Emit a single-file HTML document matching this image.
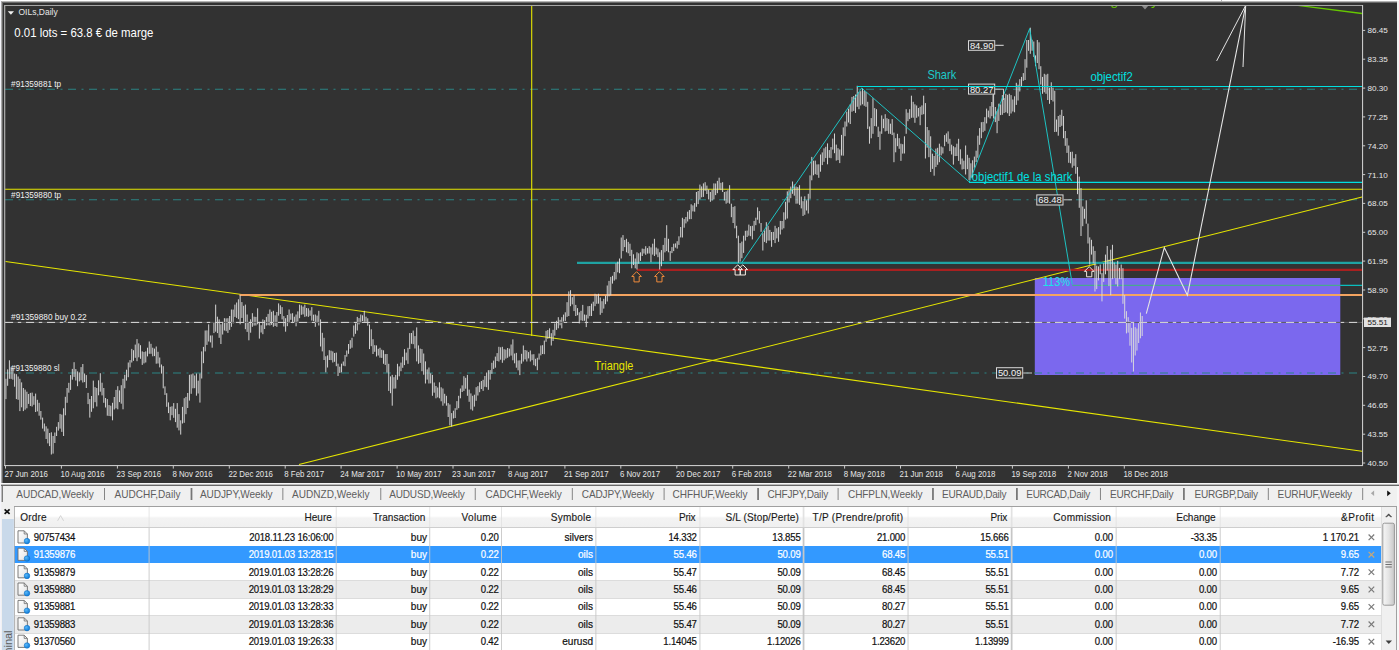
<!DOCTYPE html>
<html lang="fr"><head><meta charset="utf-8"><title>OILs,Daily</title>
<style>
html,body{margin:0;padding:0}
body{width:1399px;height:650px;overflow:hidden;background:#f0f0f0;position:relative;font-family:"Liberation Sans",Arial,sans-serif}
.chart{position:absolute;left:0;top:0;display:block}
.panel{position:absolute;left:0;top:486px;width:1600.0px;height:164px;transform:scaleX(0.874375);transform-origin:0 0;background:#f0f0f0;overflow:hidden}
.panel *{position:absolute;box-sizing:border-box;white-space:nowrap}
.tabs{left:0;top:0;width:100%;height:19px}
.tab{top:0;line-height:16.6px;font-size:11.5px;color:#5e5e5e}
.sep{top:2px;width:1.25px;height:11.8px;background:#767676}
.grid{background:#fff;border-top:1px solid #a0a0a0;border-left:1.2px solid #a0a0a0}
.thead{height:21px;background:linear-gradient(#ffffff 0,#ffffff 45%,#f3f3f3 55%,#f0f0f0 100%);border-bottom:1px solid #cecece}
.th{top:-0.1px;-webkit-text-stroke:0.15px currentColor;line-height:20px;font-size:11.5px;color:#1a1a1a}
.hdiv{top:0;width:1.2px;height:20px;background:#e2e2e2}
.row{height:17.4px;background:#fff;border-top:1px solid #dcdcdc}
.row.alt{background:#ececec}
.row.sel{background:#3399ff;border-top-color:#3399ff;color:#fff}
.row.sel+.row{border-top-color:#fff}
.row.first{border-top-color:#fff}
.td{top:-0.5px;line-height:17.4px;font-size:11px;letter-spacing:-0.21px;color:#101010;-webkit-text-stroke:0.22px currentColor}
.td.t{font-size:11.5px;letter-spacing:0}
.row.sel .td{color:#fff}
.vdiv{width:1.2px;height:122px;background:#c6c6c6}
.overlay{position:absolute;left:0;top:486px;display:block}
.vtext{position:absolute;left:2.5px;top:650px;width:60px;height:11px;line-height:11px;font-size:11px;color:#5c5c5c;transform-origin:0 0;transform:rotate(-90deg) translate(-22px,0);white-space:nowrap}
</style></head>
<body>
<svg class="chart" width="1399" height="486" viewBox="0 0 1399 486" font-family="Liberation Sans, Arial, sans-serif">
<rect x="0" y="0" width="1399" height="486" fill="#f0f0f0"/>
<rect x="0" y="0" width="1399" height="1" fill="#ffffff"/>
<rect x="1" y="1" width="1396" height="1" fill="#b4b4b4"/>
<rect x="1" y="2" width="1396" height="481" fill="#696969"/>
<rect x="1" y="1" width="1" height="482" fill="#a8a8a8"/>
<rect x="3" y="3" width="1394" height="480" fill="#323232"/>
<rect x="0" y="0" width="1" height="486" fill="#f4f4fa"/>
<rect x="1221" y="0" width="1" height="2" fill="#b0b0b0"/>
<rect x="0" y="483" width="1399" height="1.2" fill="#f6f6f6"/>
<rect x="1" y="484.7" width="1399" height="1.1" fill="#484848"/>
<defs><clipPath id="plot"><rect x="5" y="5.5" width="1357.5" height="460"/></clipPath></defs>
<g clip-path="url(#plot)">
<rect x="1034.8" y="278" width="305.5" height="97" fill="#7b68ee"/>
<line x1="5" y1="89.3" x2="1362" y2="89.3" stroke="#2b8484" stroke-width="1.1" stroke-dasharray="8 5.5 2 5.5"/>
<line x1="5" y1="199.8" x2="1362" y2="199.8" stroke="#2b8484" stroke-width="1.1" stroke-dasharray="8 5.5 2 5.5"/>
<line x1="5" y1="373.0" x2="1362" y2="373.0" stroke="#2b8484" stroke-width="1.1" stroke-dasharray="8 5.5 2 5.5"/>
<line x1="5" y1="189.3" x2="1362" y2="189.3" stroke="#e6e600" stroke-width="1.1" />
<line x1="531.7" y1="5" x2="531.7" y2="336" stroke="#e6e600" stroke-width="1.1" />
<line x1="5.5" y1="261.5" x2="1362" y2="451.3" stroke="#e6e600" stroke-width="1.05" />
<line x1="299" y1="464.5" x2="1362" y2="196.9" stroke="#e6e600" stroke-width="1.05" />
<line x1="239.5" y1="295" x2="1362" y2="295" stroke="#f4a460" stroke-width="2.0" />
<line x1="577" y1="262.8" x2="1362" y2="262.8" stroke="#1fa3a3" stroke-width="2.2" />
<line x1="637" y1="269.9" x2="1362" y2="269.9" stroke="#a82020" stroke-width="2.2" />
<line x1="969" y1="182.3" x2="1362" y2="182.3" stroke="#00e0e0" stroke-width="1.2" />
<line x1="1072.3" y1="285.3" x2="1340.3" y2="285.3" stroke="#3cb878" stroke-width="1.0" />
<line x1="1340.3" y1="285.3" x2="1362" y2="285.3" stroke="#00e0e0" stroke-width="1.0" />
<path d="M5.90 378.8V399.1M7.65 369.4V385.8M9.40 360.3V378.8M11.14 367.1V378.9M12.89 367.7V379.7M14.64 373.6V386.7M16.39 374.2V399.1M18.14 376.5V399.8M19.88 378.8V411.1M21.63 382.4V407.3M23.38 388.0V411.1M25.13 389.6V409.7M26.88 391.7V408.3M28.63 394.0V403.9M30.37 392.9V406.0M32.12 392.6V406.5M33.87 396.2V404.8M35.62 393.6V412.0M37.37 399.8V411.4M39.11 402.8V415.7M40.86 411.0V419.6M42.61 417.6V428.6M44.36 423.5V431.4M46.11 426.3V439.0M47.85 428.6V443.4M49.60 433.0V446.1M51.35 432.3V454.5M53.10 436.0V453.6M54.85 432.5V443.0M56.60 426.8V436.0M58.34 422.1V430.6M60.09 413.9V428.6M61.84 414.6V431.9M63.59 408.3V436.0M65.34 396.8V415.3M67.08 388.0V402.8M68.83 382.8V392.7M70.58 375.1V389.9M72.33 368.9V379.7M74.08 362.2V376.9M75.83 369.1V380.5M77.57 371.4V386.2M79.32 372.4V381.4M81.07 367.1V380.3M82.82 364.0V382.5M84.57 373.5V382.1M86.31 375.1V388.0M88.06 392.9V404.1M89.81 399.1V417.6M91.56 396.0V411.8M93.31 380.6V408.3M95.05 387.1V402.2M96.80 388.0V406.5M98.55 380.3V395.3M100.30 373.2V391.7M102.05 382.7V395.4M103.80 388.0V402.8M105.54 398.0V407.5M107.29 399.1V415.7M109.04 405.1V416.0M110.79 405.7V416.3M112.54 402.8V420.3M114.28 397.0V409.5M116.03 389.9V408.3M117.78 386.2V409.3M119.53 390.4V402.1M121.28 385.2V403.7M123.02 378.8V409.3M124.77 374.8V388.3M126.52 369.7V380.6M128.27 362.5V377.2M130.02 360.1V367.4M131.76 348.9V362.5M133.51 350.2V360.8M135.26 344.6V357.8M137.01 339.1V361.2M138.76 343.4V357.3M140.51 345.2V358.8M142.25 351.4V364.9M144.00 352.0V363.4M145.75 351.4V362.5M147.50 347.7V356.4M149.25 341.5V353.8M150.99 343.8V353.8M152.74 347.7V356.3M154.49 348.6V356.1M156.24 346.5V363.7M157.99 351.8V363.5M159.73 357.5V367.4M161.48 364.5V373.6M163.23 366.2V388.3M164.98 386.4V394.9M166.73 393.2V406.8M168.48 402.4V413.1M170.22 406.8V420.3M171.97 406.3V415.2M173.72 403.1V417.8M175.47 408.8V422.1M177.22 403.1V427.7M178.96 414.1V430.4M180.71 420.3V434.6M182.46 406.9V423.5M184.21 398.2V422.8M185.96 396.9V414.2M187.71 393.0V408.0M189.45 374.8V400.6M191.20 374.4V393.8M192.95 373.5V388.3M194.70 375.5V388.2M196.45 373.5V395.7M198.19 380.7V393.5M199.94 373.5V402.6M201.69 351.4V378.5M203.44 346.9V363.2M205.19 330.5V351.4M206.93 330.4V344.9M208.68 324.3V341.5M210.43 335.5V342.4M212.18 335.4V347.7M213.93 322.5V333.1M215.67 304.6V331.7M217.42 316.7V333.1M219.17 319.4V337.8M220.92 324.3V344.0M222.67 321.9V334.5M224.42 318.2V330.5M226.16 318.4V331.2M227.91 318.2V332.9M229.66 316.0V329.9M231.41 309.5V326.8M233.16 309.6V323.4M234.90 304.6V316.9M236.65 302.5V317.9M238.40 299.3V319.2M240.15 295.3V324.3M241.90 302.1V317.9M243.65 305.8V323.1M245.39 304.6V329.2M247.14 314.5V331.9M248.89 321.8V340.3M250.64 319.3V332.7M252.39 313.2V326.8M254.13 316.7V325.6M255.88 316.9V325.5M257.63 308.3V324.3M259.38 321.8V338.6M261.13 325.2V332.5M262.87 319.4V334.2M264.62 320.2V329.0M266.37 316.9V325.5M268.12 313.9V325.2M269.87 309.5V325.5M271.61 311.8V324.9M273.36 310.8V326.8M275.11 315.3V326.0M276.86 312.0V326.8M278.61 303.4V315.7M280.36 305.3V314.0M282.10 307.1V319.4M283.85 316.1V326.5M285.60 318.2V331.7M287.35 315.0V326.2M289.10 309.5V323.1M290.84 313.6V319.8M292.59 313.2V323.1M294.34 316.7V322.5M296.09 314.5V326.3M297.84 311.4V321.6M299.58 304.6V318.2M301.33 305.3V314.8M303.08 306.6V314.4M304.83 304.6V316.9M306.58 308.0V316.3M308.33 308.3V316.9M310.07 310.4V315.8M311.82 307.1V320.6M313.57 314.7V321.2M315.32 314.5V326.8M317.07 315.6V322.9M318.81 310.8V325.5M320.56 319.4V346.5M322.31 332.8V351.4M324.06 337.8V360.0M325.81 356.3V372.3M327.55 355.4V367.5M329.30 350.2V360.0M331.05 350.7V360.1M332.80 351.4V362.5M334.55 353.0V361.8M336.30 352.6V366.2M338.04 363.7V376.0M339.79 366.7V372.9M341.54 363.7V372.3M343.29 361.5V365.7M345.04 355.1V366.2M346.78 350.5V356.7M348.53 344.0V353.8M350.28 340.2V348.8M352.03 337.8V347.7M353.78 325.5V336.6M355.52 323.4V333.8M357.27 316.9V330.5M359.02 318.1V324.4M360.77 314.5V323.1M362.52 315.3V321.1M364.27 310.8V321.8M366.01 316.7V321.8M367.76 318.3V325.7M369.51 324.5V349.1M371.26 329.3V346.2M373.01 339.2V354.0M374.75 345.2V351.8M376.50 345.4V356.5M378.25 348.8V355.5M380.00 347.8V357.7M381.75 349.7V357.9M383.49 350.3V363.8M385.24 354.1V364.9M386.99 354.0V372.5M388.74 363.8V390.9M390.49 376.4V393.2M392.24 374.9V405.7M393.98 377.2V388.7M395.73 374.9V388.5M397.48 363.8V379.8M399.23 366.4V376.3M400.98 362.6V371.2M402.72 356.8V367.8M404.47 349.1V365.1M406.22 352.6V360.4M407.97 347.8V363.8M409.72 333.1V349.1M411.46 333.0V343.8M413.21 330.6V344.2M414.96 336.1V348.5M416.71 327.4V361.4M418.46 345.4V363.8M420.21 348.6V362.9M421.95 349.1V371.2M423.70 353.5V374.7M425.45 361.4V383.5M427.20 369.4V379.6M428.95 367.5V383.5M430.69 373.3V383.4M432.44 374.9V395.8M434.19 382.5V392.7M435.94 386.0V398.3M437.69 387.5V397.4M439.43 382.3V398.3M441.18 387.3V401.3M442.93 388.5V405.7M444.68 393.8V403.4M446.43 395.8V405.7M448.18 403.1V417.0M449.92 404.5V425.4M451.67 413.1V426.6M453.42 410.7V418.5M455.17 408.2V418.0M456.92 401.1V409.8M458.66 395.8V408.2M460.41 388.5V398.3M462.16 385.4V392.0M463.91 376.2V390.9M465.66 377.8V388.7M467.40 374.9V395.8M469.15 389.6V401.8M470.90 393.4V409.4M472.65 395.8V410.6M474.40 394.7V406.6M476.15 387.2V400.8M477.89 386.1V395.5M479.64 382.3V392.2M481.39 381.0V389.0M483.14 379.8V390.9M484.89 376.0V386.8M486.63 372.5V387.2M488.38 370.2V389.8M490.13 370.1V379.7M491.88 362.8V373.8M493.63 360.6V368.9M495.37 356.6V367.7M497.12 353.1V361.0M498.87 346.8V361.5M500.62 347.3V359.7M502.37 346.8V362.8M504.12 349.2V360.3M505.86 349.6V358.6M507.61 348.0V357.8M509.36 348.6V356.6M511.11 344.5V355.6M512.86 339.4V360.3M514.60 353.5V363.3M516.35 352.9V367.7M518.10 360.5V370.3M519.85 360.3V375.1M521.60 353.8V363.7M523.34 345.5V361.5M525.09 350.0V359.4M526.84 350.5V361.5M528.59 352.1V358.4M530.34 350.5V361.5M532.09 354.4V360.2M533.83 354.2V365.2M535.58 358.8V366.2M537.33 357.8V370.2M539.08 353.5V359.6M540.83 345.5V355.4M542.57 345.2V354.0M544.32 340.6V354.2M546.07 330.8V341.8M547.82 330.0V338.8M549.57 328.3V338.2M551.31 333.2V345.5M553.06 329.8V341.0M554.81 323.4V335.7M556.56 320.8V329.9M558.31 317.2V328.3M560.06 319.8V325.3M561.80 317.2V328.3M563.55 314.6V321.6M565.30 312.3V320.9M567.05 302.2V316.8M568.80 291.4V316.0M570.54 290.2V306.2M572.29 297.2V304.4M574.04 295.1V311.1M575.79 304.9V316.0M577.54 308.1V315.2M579.28 312.3V323.4M581.03 310.8V320.4M582.78 304.9V320.9M584.53 314.5V320.8M586.28 314.8V327.1M588.03 306.2V318.5M589.77 306.0V316.1M591.52 303.7V316.0M593.27 301.7V310.8M595.02 293.8V306.2M596.77 294.5V303.8M598.51 293.8V303.7M600.26 297.5V314.8M602.01 301.2V312.9M603.76 298.8V308.6M605.51 295.6V304.2M607.25 285.5V301.5M609.00 280.9V296.4M610.75 276.9V295.4M612.50 275.8V283.6M614.25 272.0V280.6M616.00 263.4V279.4M617.74 261.7V272.3M619.49 258.5V273.2M621.24 237.5V258.5M622.99 235.1V251.1M624.74 240.0V247.1M626.48 238.8V252.3M628.23 241.9V253.3M629.98 243.7V256.0M631.73 249.8V268.3M633.48 254.3V265.0M635.22 258.5V268.3M636.97 252.3V269.5M638.72 253.3V263.8M640.47 252.3V260.9M642.22 248.6V256.0M643.97 248.9V253.5M645.71 246.2V254.8M647.46 248.1V253.6M649.21 246.2V253.5M650.96 247.4V262.2M652.71 243.7V254.6M654.45 238.8V256.0M656.20 247.5V254.5M657.95 248.6V257.2M659.70 252.3V269.5M661.45 250.1V266.2M663.19 244.9V260.9M664.94 237.9V252.4M666.69 225.2V251.1M668.44 238.8V252.3M670.19 251.1V260.9M671.94 247.1V253.1M673.68 243.7V251.1M675.43 243.4V247.6M677.18 241.2V248.6M678.93 236.3V244.9M680.68 227.0V237.4M682.42 217.8V237.5M684.17 219.1V227.7M685.92 217.0V223.4M687.67 211.7V221.5M689.42 210.1V219.2M691.16 204.3V219.1M692.91 205.4V211.4M694.66 203.1V211.7M696.41 192.0V206.8M698.16 191.0V204.1M699.91 184.6V199.4M701.65 186.4V197.3M703.40 183.4V196.9M705.15 182.2V190.8M706.90 185.6V194.0M708.65 189.5V199.4M710.39 192.0V201.8M712.14 189.8V200.5M713.89 183.4V199.4M715.64 183.5V195.1M717.39 180.9V193.2M719.13 177.7V189.5M720.88 182.8V190.1M722.63 182.2V192.0M724.38 192.0V200.6M726.13 191.4V203.7M727.88 190.2V202.8M729.62 185.2V203.7M731.37 203.7V217.2M733.12 206.9V223.0M734.87 206.2V228.3M736.62 225.8V238.2M738.36 235.7V262.8M740.11 243.1V261.5M741.86 241.6V258.2M743.61 235.7V252.9M745.36 230.8V240.6M747.10 230.6V237.0M748.85 224.6V235.7M750.60 226.1V236.2M752.35 225.8V239.4M754.10 220.9V230.8M755.85 217.7V225.2M757.59 207.4V219.7M759.34 211.1V223.4M761.09 223.0V231.8M762.84 233.2V250.5M764.59 230.4V241.9M766.33 222.2V243.1M768.08 225.8V240.6M769.83 229.9V240.6M771.58 232.0V246.8M773.33 231.9V240.0M775.07 225.8V243.1M776.82 228.3V238.4M778.57 227.1V241.8M780.32 220.9V234.5M782.07 221.0V229.6M783.82 212.3V228.3M785.56 201.8V219.7M787.31 191.4V218.5M789.06 190.2V202.5M790.81 186.6V198.2M792.56 181.5V193.8M794.30 184.5V195.7M796.05 186.5V203.7M797.80 187.1V203.6M799.55 185.2V204.9M801.30 196.6V208.4M803.04 201.2V216.0M804.79 196.3V214.8M806.54 200.4V210.5M808.29 193.8V213.5M810.04 175.4V198.8M811.79 156.9V180.3M813.53 160.7V175.3M815.28 160.6V174.2M817.03 164.4V174.9M818.78 164.3V177.8M820.53 154.5V171.7M822.27 152.4V165.1M824.02 148.3V161.8M825.77 146.8V158.1M827.52 143.4V164.3M829.27 150.1V157.8M831.01 147.1V158.2M832.76 138.6V149.6M834.51 133.5V153.2M836.26 144.6V160.6M838.01 148.2V160.1M839.76 149.5V163.1M841.50 134.9V155.5M843.25 127.4V155.7M845.00 121.5V136.2M846.75 111.7V126.5M848.50 108.7V122.5M850.24 104.3V124.0M851.99 96.9V111.7M853.74 96.0V110.9M855.49 94.5V112.9M857.24 85.8V106.8M858.98 92.0V109.2M860.73 91.2V105.5M862.48 88.3V104.3M864.23 90.9V105.8M865.98 92.0V106.8M867.73 101.8V128.9M869.47 126.5V143.7M871.22 118.1V138.3M872.97 98.2V133.8M874.72 108.1V126.1M876.47 109.2V126.5M878.21 126.7V137.0M879.96 131.4V149.8M881.71 115.4V133.8M883.46 118.8V128.2M885.21 114.2V131.4M886.95 118.2V130.9M888.70 119.1V133.8M890.45 123.7V133.9M892.20 119.1V135.1M893.95 132.6V162.2M895.70 138.2V152.3M897.44 133.8V146.2M899.19 138.2V148.8M900.94 143.7V160.9M902.69 144.2V153.6M904.44 136.3V153.5M906.18 109.2V133.8M907.93 112.7V121.2M909.68 109.2V119.1M911.43 95.7V117.8M913.18 101.8V117.7M914.92 104.3V122.8M916.67 105.5V117.8M918.42 108.0V116.5M920.17 106.8V125.2M921.92 105.4V114.8M923.67 95.7V114.2M925.41 103.1V158.5M927.16 127.0V147.7M928.91 130.2V157.2M930.66 136.3V172.0M932.41 153.7V168.9M934.15 156.0V175.7M935.90 148.6V167.1M937.65 147.8V164.8M939.40 143.7V162.2M941.15 146.5V155.4M942.89 147.4V153.5M944.64 135.1V146.2M946.39 133.4V141.8M948.14 131.4V143.7M949.89 138.8V151.1M951.64 144.7V154.5M953.38 146.2V164.6M955.13 147.3V156.1M956.88 143.7V156.0M958.63 138.8V160.9M960.38 149.3V164.4M962.12 158.5V169.5M963.87 160.7V169.1M965.62 145.5V174.5M967.37 154.8V169.2M969.12 157.8V180.0M970.86 163.3V177.9M972.61 160.3V177.5M974.36 156.6V167.7M976.11 150.7V162.0M977.86 135.7V157.8M979.61 128.1V144.8M981.35 122.2V138.2M983.10 121.9V132.2M984.85 117.2V130.8M986.60 108.6V123.4M988.35 110.6V117.3M990.09 106.2V118.5M991.84 102.0V116.2M993.59 93.8V118.5M995.34 107.0V122.1M997.09 111.1V133.2M998.83 103.7V120.9M1000.58 104.4V115.1M1002.33 95.1V114.8M1004.08 98.1V113.0M1005.83 93.8V112.3M1007.58 94.8V113.3M1009.32 93.8V116.0M1011.07 95.1V113.5M1012.82 99.5V111.5M1014.57 96.3V112.3M1016.32 82.8V104.9M1018.06 84.7V100.5M1019.81 79.2V91.5M1021.56 76.9V86.2M1023.31 73.1V80.8M1025.06 59.2V80.0M1026.81 40.0V67.7M1028.55 40.0V50.8M1030.30 27.7V53.8M1032.05 39.7V50.7M1033.80 41.5V56.9M1035.55 55.4V66.2M1037.29 40.0V63.1M1039.04 42.3V69.2M1040.79 66.2V84.6M1042.54 76.9V93.8M1044.29 73.8V92.3M1046.03 74.6V93.8M1047.78 73.8V100.0M1049.53 87.7V103.8M1051.28 82.3V100.0M1053.03 87.7V101.5M1054.78 90.8V132.0M1056.52 119.5V131.8M1058.27 116.0V135.7M1060.02 114.8V127.0M1061.77 109.8V125.8M1063.52 116.0V138.2M1065.26 131.0V145.8M1067.01 138.2V152.9M1068.76 145.5V162.8M1070.51 151.9V163.3M1072.26 151.7V167.7M1074.00 158.2V165.8M1075.75 154.2V173.8M1077.50 167.1V194.2M1079.25 176.6V207.8M1081.00 188.0V236.0M1082.75 206.5V226.2M1084.49 208.8V218.7M1086.24 200.3V223.7M1087.99 223.6V243.5M1089.74 237.4V264.5M1091.49 239.8V254.6M1093.23 246.3V263.4M1094.98 250.9V291.5M1096.73 265.7V289.1M1098.48 266.4V280.4M1100.23 264.5V274.3M1101.97 273.1V301.4M1103.72 263.3V281.9M1105.47 254.6V274.3M1107.22 246.0V270.6M1108.97 259.7V286.1M1110.72 249.7V295.2M1112.46 244.8V279.2M1114.21 262.6V278.2M1115.96 264.5V284.2M1117.71 260.8V286.6M1119.46 267.9V279.2M1121.20 264.5V279.2M1122.95 268.2V303.8M1124.70 295.2V318.6M1126.45 311.2V333.4M1128.20 317.2V332.6M1129.94 321.1V345.7M1131.69 327.9V362.5M1133.44 322.3V371.5M1135.19 327.2V355.5M1136.94 328.5V350.6M1138.68 323.1V343.0M1140.43 312.5V338.3M1142.18 316.0V336.0" stroke="#dcdcdc" stroke-width="0.95" fill="none"/>
<line x1="5" y1="322.4" x2="1362" y2="322.4" stroke="#5c5c5c" stroke-width="1.0" />
<line x1="5" y1="322.4" x2="1362" y2="322.4" stroke="#e4e4e4" stroke-width="0.95" stroke-dasharray="8.1 4.7 3.4 4.8"/>
<polyline points="741.7,262.8 861.7,88.0 969.3,182.0 1029.7,28.6 1072.3,284.5" fill="none" stroke="#1ccaca" stroke-width="0.95" stroke-linejoin="round"/>
<rect x="968.5" y="40.7" width="26.200000000000045" height="9.599999999999994" fill="#323232" stroke="#d8d8d8" stroke-width="1"/>
<text x="969.9" y="49.0" font-size="9.6" fill="#f4f4f4" textLength="23.5" lengthAdjust="spacingAndGlyphs">84.90</text>
<line x1="995.2" y1="45.3" x2="1003.7" y2="45.3" stroke="#e0e0e0" stroke-width="1.0" />
<rect x="968.5" y="84.1" width="26.200000000000045" height="10.0" fill="#323232" stroke="#d8d8d8" stroke-width="1"/>
<text x="969.9" y="92.6" font-size="9.6" fill="#f4f4f4" textLength="23.5" lengthAdjust="spacingAndGlyphs">80.27</text>
<line x1="995.2" y1="89.2" x2="1003.7" y2="89.2" stroke="#c8c8c8" stroke-width="1.0" />
<line x1="1003.5" y1="89" x2="1003.5" y2="100" stroke="#c8c8c8" stroke-width="1.0" />
<line x1="993" y1="94.6" x2="993" y2="107" stroke="#c8c8c8" stroke-width="1.0" />
<rect x="1036.8" y="194.9" width="26.200000000000045" height="10.099999999999994" fill="#323232" stroke="#d8d8d8" stroke-width="1"/>
<text x="1038.2" y="203.4" font-size="9.6" fill="#f4f4f4" textLength="23.5" lengthAdjust="spacingAndGlyphs">68.48</text>
<line x1="1063.5" y1="199.8" x2="1072" y2="199.8" stroke="#c8c8c8" stroke-width="1.0" />
<rect x="996.5" y="367.7" width="26.200000000000045" height="10.400000000000034" fill="#323232" stroke="#d8d8d8" stroke-width="1"/>
<text x="997.9" y="376.4" font-size="9.6" fill="#f4f4f4" textLength="23.5" lengthAdjust="spacingAndGlyphs">50.09</text>
<line x1="1023.2" y1="373" x2="1032" y2="373" stroke="#c8c8c8" stroke-width="1.2" />
<line x1="857" y1="86.5" x2="1362" y2="86.5" stroke="#00e0e0" stroke-width="1.2" />
<polyline points="1146.3,313.7 1164.3,247.5 1187.4,295.2 1245.7,5.4" fill="none" stroke="#e4e4e4" stroke-width="1.1"/>
<line x1="1245.7" y1="5.4" x2="1216.6" y2="61" stroke="#e4e4e4" stroke-width="1.0" />
<line x1="1245.7" y1="5.4" x2="1243" y2="67" stroke="#e4e4e4" stroke-width="1.0" />
<path transform="translate(636.6,271.7)" d="M0 0L4.8 4.8H2.6V10.2H-2.6V4.8H-4.8Z" fill="none" stroke="#ee8a3c" stroke-width="1"/>
<path transform="translate(659.4,271.7)" d="M0 0L4.8 4.8H2.6V10.2H-2.6V4.8H-4.8Z" fill="none" stroke="#ee8a3c" stroke-width="1"/>
<path transform="translate(737.7,264.8)" d="M0 0L4.8 4.8H2.6V10.2H-2.6V4.8H-4.8Z" fill="none" stroke="#f4ece4" stroke-width="1"/>
<path transform="translate(742.8,264.8)" d="M0 0L4.8 4.8H2.6V10.2H-2.6V4.8H-4.8Z" fill="none" stroke="#f4ece4" stroke-width="1"/>
<path transform="translate(1089.2,266.6)" d="M0 0L4.8 4.8H2.6V10.2H-2.6V4.8H-4.8Z" fill="none" stroke="#f0e4dc" stroke-width="1"/>
<text x="594.4" y="370.2" font-size="12.8" fill="#e6e600" text-anchor="start" textLength="39.0" lengthAdjust="spacingAndGlyphs" >Triangle</text>
<text x="927.4" y="78.8" font-size="12.8" fill="#1ccaca" text-anchor="start" textLength="28.8" lengthAdjust="spacingAndGlyphs" >Shark</text>
<text x="1090.5" y="81.2" font-size="13" fill="#00e0e0" text-anchor="start" textLength="42.2" lengthAdjust="spacingAndGlyphs" >objectif2</text>
<text x="971.8" y="181.0" font-size="13" fill="#00e0e0" text-anchor="start" textLength="100.6" lengthAdjust="spacingAndGlyphs" >objectif1 de la shark</text>
<text x="1042.8" y="286.0" font-size="12.6" fill="#19e6e6" text-anchor="start" textLength="27.3" lengthAdjust="spacingAndGlyphs" >113%</text>
<text x="1090.7" y="4.6" font-size="13" fill="#66c800" text-anchor="start" textLength="67.5" lengthAdjust="spacingAndGlyphs" >Target Buy</text>
<path d="M1141.5 5.5h7l-3.5 4z" fill="#8c8c8c"/>
<line x1="1296" y1="5.2" x2="1362" y2="13.5" stroke="#66c800" stroke-width="1.3" />
</g>
<rect x="4" y="5" width="1359" height="1" fill="#a6a6a6"/>
<rect x="4" y="5" width="1.3" height="461" fill="#a6a6a6"/>
<rect x="1362" y="5" width="1.1" height="461" fill="#c8c8c8"/>
<rect x="4" y="465" width="1359" height="1.1" fill="#c8c8c8"/>
<path d="M7.8 11.2h6.2l-3.1 3.6z" fill="#f0f0f0"/>
<text x="18.5" y="15.2" font-size="9.3" fill="#e8e8e8" text-anchor="start" textLength="39.2" lengthAdjust="spacingAndGlyphs" >OILs,Daily</text>
<text x="14.3" y="37.1" font-size="12.6" fill="#ffffff" text-anchor="start" textLength="139.1" lengthAdjust="spacingAndGlyphs" >0.01 lots = 63.8 € de marge</text>
<text x="11.1" y="86.6" font-size="9.0" fill="#f0f0f0" text-anchor="start" textLength="50.0" lengthAdjust="spacingAndGlyphs" >#91359881 tp</text>
<text x="11.1" y="198.2" font-size="9.0" fill="#f0f0f0" text-anchor="start" textLength="50.0" lengthAdjust="spacingAndGlyphs" >#91359880 tp</text>
<text x="11.1" y="320.3" font-size="9.0" fill="#f0f0f0" text-anchor="start" textLength="75.5" lengthAdjust="spacingAndGlyphs" >#91359880 buy 0.22</text>
<text x="11.1" y="370.6" font-size="9.0" fill="#f0f0f0" text-anchor="start" textLength="48.4" lengthAdjust="spacingAndGlyphs" >#91359880 sl</text>
<line x1="1363" y1="30.4" x2="1365.2" y2="30.4" stroke="#c8c8c8" stroke-width="1.0" />
<text x="1367.5" y="33.3" font-size="8.1" fill="#e6e6e6" text-anchor="start" textLength="20.3" lengthAdjust="spacingAndGlyphs" >86.45</text>
<line x1="1363" y1="59.2" x2="1365.2" y2="59.2" stroke="#c8c8c8" stroke-width="1.0" />
<text x="1367.5" y="62.1" font-size="8.1" fill="#e6e6e6" text-anchor="start" textLength="20.3" lengthAdjust="spacingAndGlyphs" >83.35</text>
<line x1="1363" y1="88.1" x2="1365.2" y2="88.1" stroke="#c8c8c8" stroke-width="1.0" />
<text x="1367.5" y="91.0" font-size="8.1" fill="#e6e6e6" text-anchor="start" textLength="20.3" lengthAdjust="spacingAndGlyphs" >80.30</text>
<line x1="1363" y1="116.9" x2="1365.2" y2="116.9" stroke="#c8c8c8" stroke-width="1.0" />
<text x="1367.5" y="119.8" font-size="8.1" fill="#e6e6e6" text-anchor="start" textLength="20.3" lengthAdjust="spacingAndGlyphs" >77.25</text>
<line x1="1363" y1="145.8" x2="1365.2" y2="145.8" stroke="#c8c8c8" stroke-width="1.0" />
<text x="1367.5" y="148.7" font-size="8.1" fill="#e6e6e6" text-anchor="start" textLength="20.3" lengthAdjust="spacingAndGlyphs" >74.20</text>
<line x1="1363" y1="174.6" x2="1365.2" y2="174.6" stroke="#c8c8c8" stroke-width="1.0" />
<text x="1367.5" y="177.5" font-size="8.1" fill="#e6e6e6" text-anchor="start" textLength="20.3" lengthAdjust="spacingAndGlyphs" >71.10</text>
<line x1="1363" y1="203.4" x2="1365.2" y2="203.4" stroke="#c8c8c8" stroke-width="1.0" />
<text x="1367.5" y="206.3" font-size="8.1" fill="#e6e6e6" text-anchor="start" textLength="20.3" lengthAdjust="spacingAndGlyphs" >68.05</text>
<line x1="1363" y1="232.3" x2="1365.2" y2="232.3" stroke="#c8c8c8" stroke-width="1.0" />
<text x="1367.5" y="235.2" font-size="8.1" fill="#e6e6e6" text-anchor="start" textLength="20.3" lengthAdjust="spacingAndGlyphs" >65.00</text>
<line x1="1363" y1="261.1" x2="1365.2" y2="261.1" stroke="#c8c8c8" stroke-width="1.0" />
<text x="1367.5" y="264.0" font-size="8.1" fill="#e6e6e6" text-anchor="start" textLength="20.3" lengthAdjust="spacingAndGlyphs" >61.95</text>
<line x1="1363" y1="290.0" x2="1365.2" y2="290.0" stroke="#c8c8c8" stroke-width="1.0" />
<text x="1367.5" y="292.9" font-size="8.1" fill="#e6e6e6" text-anchor="start" textLength="20.3" lengthAdjust="spacingAndGlyphs" >58.90</text>
<line x1="1363" y1="318.8" x2="1365.2" y2="318.8" stroke="#c8c8c8" stroke-width="1.0" />
<text x="1367.5" y="321.7" font-size="8.1" fill="#e6e6e6" text-anchor="start" textLength="20.3" lengthAdjust="spacingAndGlyphs" >55.80</text>
<line x1="1363" y1="347.6" x2="1365.2" y2="347.6" stroke="#c8c8c8" stroke-width="1.0" />
<text x="1367.5" y="350.5" font-size="8.1" fill="#e6e6e6" text-anchor="start" textLength="20.3" lengthAdjust="spacingAndGlyphs" >52.75</text>
<line x1="1363" y1="376.5" x2="1365.2" y2="376.5" stroke="#c8c8c8" stroke-width="1.0" />
<text x="1367.5" y="379.4" font-size="8.1" fill="#e6e6e6" text-anchor="start" textLength="20.3" lengthAdjust="spacingAndGlyphs" >49.70</text>
<line x1="1363" y1="405.3" x2="1365.2" y2="405.3" stroke="#c8c8c8" stroke-width="1.0" />
<text x="1367.5" y="408.2" font-size="8.1" fill="#e6e6e6" text-anchor="start" textLength="20.3" lengthAdjust="spacingAndGlyphs" >46.65</text>
<line x1="1363" y1="434.2" x2="1365.2" y2="434.2" stroke="#c8c8c8" stroke-width="1.0" />
<text x="1367.5" y="437.1" font-size="8.1" fill="#e6e6e6" text-anchor="start" textLength="20.3" lengthAdjust="spacingAndGlyphs" >43.55</text>
<line x1="1363" y1="463.0" x2="1365.2" y2="463.0" stroke="#c8c8c8" stroke-width="1.0" />
<text x="1367.5" y="465.9" font-size="8.1" fill="#e6e6e6" text-anchor="start" textLength="20.3" lengthAdjust="spacingAndGlyphs" >40.50</text>
<rect x="1364" y="317.6" width="27" height="9.4" fill="#e2e2e2"/>
<text x="1367.5" y="325.3" font-size="8.1" fill="#202020" text-anchor="start" textLength="20.3" lengthAdjust="spacingAndGlyphs" >55.51</text>
<rect x="5.0" y="466" width="1" height="2.6" fill="#c8c8c8"/>
<text x="4.6" y="477.2" font-size="8.6" fill="#e6e6e6" text-anchor="start" textLength="43.3" lengthAdjust="spacingAndGlyphs" >27 Jun 2016</text>
<rect x="60.9" y="466" width="1" height="2.6" fill="#c8c8c8"/>
<text x="60.5" y="477.2" font-size="8.6" fill="#e6e6e6" text-anchor="start" textLength="44.2" lengthAdjust="spacingAndGlyphs" >10 Aug 2016</text>
<rect x="116.9" y="466" width="1" height="2.6" fill="#c8c8c8"/>
<text x="116.5" y="477.2" font-size="8.6" fill="#e6e6e6" text-anchor="start" textLength="44.6" lengthAdjust="spacingAndGlyphs" >23 Sep 2016</text>
<rect x="172.8" y="466" width="1" height="2.6" fill="#c8c8c8"/>
<text x="172.4" y="477.2" font-size="8.6" fill="#e6e6e6" text-anchor="start" textLength="40.2" lengthAdjust="spacingAndGlyphs" >8 Nov 2016</text>
<rect x="228.8" y="466" width="1" height="2.6" fill="#c8c8c8"/>
<text x="228.4" y="477.2" font-size="8.6" fill="#e6e6e6" text-anchor="start" textLength="44.6" lengthAdjust="spacingAndGlyphs" >22 Dec 2016</text>
<rect x="284.7" y="466" width="1" height="2.6" fill="#c8c8c8"/>
<text x="284.3" y="477.2" font-size="8.6" fill="#e6e6e6" text-anchor="start" textLength="39.8" lengthAdjust="spacingAndGlyphs" >8 Feb 2017</text>
<rect x="340.6" y="466" width="1" height="2.6" fill="#c8c8c8"/>
<text x="340.2" y="477.2" font-size="8.6" fill="#e6e6e6" text-anchor="start" textLength="44.2" lengthAdjust="spacingAndGlyphs" >24 Mar 2017</text>
<rect x="396.6" y="466" width="1" height="2.6" fill="#c8c8c8"/>
<text x="396.2" y="477.2" font-size="8.6" fill="#e6e6e6" text-anchor="start" textLength="45.5" lengthAdjust="spacingAndGlyphs" >10 May 2017</text>
<rect x="452.5" y="466" width="1" height="2.6" fill="#c8c8c8"/>
<text x="452.1" y="477.2" font-size="8.6" fill="#e6e6e6" text-anchor="start" textLength="43.3" lengthAdjust="spacingAndGlyphs" >23 Jun 2017</text>
<rect x="508.5" y="466" width="1" height="2.6" fill="#c8c8c8"/>
<text x="508.1" y="477.2" font-size="8.6" fill="#e6e6e6" text-anchor="start" textLength="39.8" lengthAdjust="spacingAndGlyphs" >8 Aug 2017</text>
<rect x="564.4" y="466" width="1" height="2.6" fill="#c8c8c8"/>
<text x="564.0" y="477.2" font-size="8.6" fill="#e6e6e6" text-anchor="start" textLength="44.6" lengthAdjust="spacingAndGlyphs" >21 Sep 2017</text>
<rect x="620.3" y="466" width="1" height="2.6" fill="#c8c8c8"/>
<text x="619.9" y="477.2" font-size="8.6" fill="#e6e6e6" text-anchor="start" textLength="40.2" lengthAdjust="spacingAndGlyphs" >6 Nov 2017</text>
<rect x="676.3" y="466" width="1" height="2.6" fill="#c8c8c8"/>
<text x="675.9" y="477.2" font-size="8.6" fill="#e6e6e6" text-anchor="start" textLength="44.6" lengthAdjust="spacingAndGlyphs" >20 Dec 2017</text>
<rect x="732.2" y="466" width="1" height="2.6" fill="#c8c8c8"/>
<text x="731.8" y="477.2" font-size="8.6" fill="#e6e6e6" text-anchor="start" textLength="39.8" lengthAdjust="spacingAndGlyphs" >6 Feb 2018</text>
<rect x="788.2" y="466" width="1" height="2.6" fill="#c8c8c8"/>
<text x="787.8" y="477.2" font-size="8.6" fill="#e6e6e6" text-anchor="start" textLength="44.2" lengthAdjust="spacingAndGlyphs" >22 Mar 2018</text>
<rect x="844.1" y="466" width="1" height="2.6" fill="#c8c8c8"/>
<text x="843.7" y="477.2" font-size="8.6" fill="#e6e6e6" text-anchor="start" textLength="41.1" lengthAdjust="spacingAndGlyphs" >8 May 2018</text>
<rect x="900.0" y="466" width="1" height="2.6" fill="#c8c8c8"/>
<text x="899.6" y="477.2" font-size="8.6" fill="#e6e6e6" text-anchor="start" textLength="43.3" lengthAdjust="spacingAndGlyphs" >21 Jun 2018</text>
<rect x="956.0" y="466" width="1" height="2.6" fill="#c8c8c8"/>
<text x="955.6" y="477.2" font-size="8.6" fill="#e6e6e6" text-anchor="start" textLength="39.8" lengthAdjust="spacingAndGlyphs" >6 Aug 2018</text>
<rect x="1011.9" y="466" width="1" height="2.6" fill="#c8c8c8"/>
<text x="1011.5" y="477.2" font-size="8.6" fill="#e6e6e6" text-anchor="start" textLength="44.6" lengthAdjust="spacingAndGlyphs" >19 Sep 2018</text>
<rect x="1067.9" y="466" width="1" height="2.6" fill="#c8c8c8"/>
<text x="1067.5" y="477.2" font-size="8.6" fill="#e6e6e6" text-anchor="start" textLength="40.2" lengthAdjust="spacingAndGlyphs" >2 Nov 2018</text>
<rect x="1123.8" y="466" width="1" height="2.6" fill="#c8c8c8"/>
<text x="1123.4" y="477.2" font-size="8.6" fill="#e6e6e6" text-anchor="start" textLength="44.6" lengthAdjust="spacingAndGlyphs" >18 Dec 2018</text>
</svg>
<div class="panel">
<div class="tabs">
<span class="tab" style="left:18.64px;letter-spacing:-0.047px">AUDCAD,Weekly</span><i class="sep" style="left:118.94px"></i>
<span class="tab" style="left:130.95px;letter-spacing:0.007px">AUDCHF,Daily</span><i class="sep" style="left:218.44px"></i>
<span class="tab" style="left:228.73px;letter-spacing:-0.128px">AUDJPY,Weekly</span><i class="sep" style="left:322.52px"></i>
<span class="tab" style="left:333.95px;letter-spacing:0.003px">AUDNZD,Weekly</span><i class="sep" style="left:434.6px"></i>
<span class="tab" style="left:445.23px;letter-spacing:-0.25px">AUDUSD,Weekly</span><i class="sep" style="left:542.67px"></i>
<span class="tab" style="left:555.25px;letter-spacing:-0.005px">CADCHF,Weekly</span><i class="sep" style="left:654.18px"></i>
<span class="tab" style="left:665.39px;letter-spacing:-0.172px">CADJPY,Weekly</span><i class="sep" style="left:758.6px"></i>
<span class="tab" style="left:769.12px;letter-spacing:-0.07px">CHFHUF,Weekly</span><i class="sep" style="left:866.33px"></i>
<span class="tab" style="left:877.77px;letter-spacing:-0.234px">CHFJPY,Daily</span><i class="sep" style="left:958.17px"></i>
<span class="tab" style="left:969.84px;letter-spacing:-0.114px">CHFPLN,Weekly</span><i class="sep" style="left:1066.48px"></i>
<span class="tab" style="left:1077.34px;letter-spacing:-0.315px">EURAUD,Daily</span><i class="sep" style="left:1162.32px"></i>
<span class="tab" style="left:1173.75px;letter-spacing:-0.372px">EURCAD,Daily</span><i class="sep" style="left:1258.04px"></i>
<span class="tab" style="left:1269.48px;letter-spacing:-0.25px">EURCHF,Daily</span><i class="sep" style="left:1353.31px"></i>
<span class="tab" style="left:1366.12px;letter-spacing:-0.297px">EURGBP,Daily</span><i class="sep" style="left:1450.06px"></i>
<span class="tab" style="left:1461.16px;letter-spacing:-0.172px">EURHUF,Weekly</span><i class="sep" style="left:1557.91px"></i>
</div>
<div class="grid" style="left:16.01px;top:20px;width:1580.56px;height:144px">
</div>
<div class="thead" style="left:17.16px;top:21px;width:1562.49px">
<span class="th" style="left:6.06px;letter-spacing:0.183px">Ordre</span>
<i class="hdiv" style="left:153.14px"></i>
<span class="th r" style="right:1200.086px;letter-spacing:0.026px">Heure</span>
<i class="hdiv" style="left:367.01px"></i>
<span class="th r" style="right:1093.045px;letter-spacing:0.035px">Transaction</span>
<i class="hdiv" style="left:474.05px"></i>
<span class="th r" style="right:1011.346px;letter-spacing:0.336px">Volume</span>
<i class="hdiv" style="left:556.05px"></i>
<span class="th r" style="right:903.385px;letter-spacing:0.225px">Symbole</span>
<i class="hdiv" style="left:663.9px"></i>
<span class="th r" style="right:784.3259999999999px;letter-spacing:-0.234px">Prix</span>
<i class="hdiv" style="left:782.5px"></i>
<span class="th r" style="right:665.85px;letter-spacing:0.12px">S/L (Stop/Perte)</span>
<i class="hdiv" style="left:901.33px"></i>
<span class="th r" style="right:546.388px;letter-spacing:0.288px">T/P (Prendre/profit)</span>
<i class="hdiv" style="left:1020.96px"></i>
<span class="th r" style="right:427.702px;letter-spacing:-0.148px">Prix</span>
<i class="hdiv" style="left:1139.21px"></i>
<span class="th r" style="right:308.95300000000003px;letter-spacing:0.273px">Commission</span>
<i class="hdiv" style="left:1258.38px"></i>
<span class="th r" style="right:189.53900000000002px;letter-spacing:-0.081px">Echange</span>
<i class="hdiv" style="left:1377.44px"></i>
<span class="th r" style="right:7.633px;letter-spacing:0.543px">&amp;Profit</span>
</div>
<div class="row first" style="left:17.16px;top:42.2px;width:1562.49px">
<span class="td" style="left:21.5px">90757434</span>
<span class="td r" style="right:1198.34px">2018.11.23 16:06:00</span>
<span class="td t r" style="right:1091.29px">buy</span>
<span class="td r" style="right:1009.29px">0.20</span>
<span class="td t r" style="right:901.44px">silvers</span>
<span class="td r" style="right:782.84px">14.332</span>
<span class="td r" style="right:664.02px">13.855</span>
<span class="td r" style="right:544.39px">21.000</span>
<span class="td r" style="right:426.13px">15.666</span>
<span class="td r" style="right:306.96px">0.00</span>
<span class="td r" style="right:187.91px">-33.35</span>
<span class="td r" style="right:25.62px">1 170.21</span>
</div>
<div class="row sel" style="left:17.16px;top:59.6px;width:1562.49px">
<span class="td" style="left:21.5px">91359876</span>
<span class="td r" style="right:1198.34px">2019.01.03 13:28:15</span>
<span class="td t r" style="right:1091.29px">buy</span>
<span class="td r" style="right:1009.29px">0.22</span>
<span class="td t r" style="right:901.44px">oils</span>
<span class="td r" style="right:782.84px">55.46</span>
<span class="td r" style="right:664.02px">50.09</span>
<span class="td r" style="right:544.39px">68.45</span>
<span class="td r" style="right:426.13px">55.51</span>
<span class="td r" style="right:306.96px">0.00</span>
<span class="td r" style="right:187.91px">0.00</span>
<span class="td r" style="right:25.62px">9.65</span>
</div>
<div class="row" style="left:17.16px;top:77.0px;width:1562.49px">
<span class="td" style="left:21.5px">91359879</span>
<span class="td r" style="right:1198.34px">2019.01.03 13:28:26</span>
<span class="td t r" style="right:1091.29px">buy</span>
<span class="td r" style="right:1009.29px">0.22</span>
<span class="td t r" style="right:901.44px">oils</span>
<span class="td r" style="right:782.84px">55.47</span>
<span class="td r" style="right:664.02px">50.09</span>
<span class="td r" style="right:544.39px">68.45</span>
<span class="td r" style="right:426.13px">55.51</span>
<span class="td r" style="right:306.96px">0.00</span>
<span class="td r" style="right:187.91px">0.00</span>
<span class="td r" style="right:25.62px">7.72</span>
</div>
<div class="row alt" style="left:17.16px;top:94.4px;width:1562.49px">
<span class="td" style="left:21.5px">91359880</span>
<span class="td r" style="right:1198.34px">2019.01.03 13:28:29</span>
<span class="td t r" style="right:1091.29px">buy</span>
<span class="td r" style="right:1009.29px">0.22</span>
<span class="td t r" style="right:901.44px">oils</span>
<span class="td r" style="right:782.84px">55.46</span>
<span class="td r" style="right:664.02px">50.09</span>
<span class="td r" style="right:544.39px">68.45</span>
<span class="td r" style="right:426.13px">55.51</span>
<span class="td r" style="right:306.96px">0.00</span>
<span class="td r" style="right:187.91px">0.00</span>
<span class="td r" style="right:25.62px">9.65</span>
</div>
<div class="row" style="left:17.16px;top:111.8px;width:1562.49px">
<span class="td" style="left:21.5px">91359881</span>
<span class="td r" style="right:1198.34px">2019.01.03 13:28:33</span>
<span class="td t r" style="right:1091.29px">buy</span>
<span class="td r" style="right:1009.29px">0.22</span>
<span class="td t r" style="right:901.44px">oils</span>
<span class="td r" style="right:782.84px">55.46</span>
<span class="td r" style="right:664.02px">50.09</span>
<span class="td r" style="right:544.39px">80.27</span>
<span class="td r" style="right:426.13px">55.51</span>
<span class="td r" style="right:306.96px">0.00</span>
<span class="td r" style="right:187.91px">0.00</span>
<span class="td r" style="right:25.62px">9.65</span>
</div>
<div class="row alt" style="left:17.16px;top:129.2px;width:1562.49px">
<span class="td" style="left:21.5px">91359883</span>
<span class="td r" style="right:1198.34px">2019.01.03 13:28:36</span>
<span class="td t r" style="right:1091.29px">buy</span>
<span class="td r" style="right:1009.29px">0.22</span>
<span class="td t r" style="right:901.44px">oils</span>
<span class="td r" style="right:782.84px">55.47</span>
<span class="td r" style="right:664.02px">50.09</span>
<span class="td r" style="right:544.39px">80.27</span>
<span class="td r" style="right:426.13px">55.51</span>
<span class="td r" style="right:306.96px">0.00</span>
<span class="td r" style="right:187.91px">0.00</span>
<span class="td r" style="right:25.62px">7.72</span>
</div>
<div class="row" style="left:17.16px;top:146.6px;width:1562.49px">
<span class="td" style="left:21.5px">91370560</span>
<span class="td r" style="right:1198.34px">2019.01.03 19:26:33</span>
<span class="td t r" style="right:1091.29px">buy</span>
<span class="td r" style="right:1009.29px">0.42</span>
<span class="td t r" style="right:901.44px">eurusd</span>
<span class="td r" style="right:782.84px">1.14045</span>
<span class="td r" style="right:664.02px">1.12026</span>
<span class="td r" style="right:544.39px">1.23620</span>
<span class="td r" style="right:426.13px">1.13999</span>
<span class="td r" style="right:306.96px">0.00</span>
<span class="td r" style="right:187.91px">0.00</span>
<span class="td r" style="right:25.62px">-16.95</span>
</div>
<i class="vdiv" style="left:170.29px;top:42px"></i>
<i class="vdiv" style="left:384.16px;top:42px"></i>
<i class="vdiv" style="left:491.21px;top:42px"></i>
<i class="vdiv" style="left:573.21px;top:42px"></i>
<i class="vdiv" style="left:681.06px;top:42px"></i>
<i class="vdiv" style="left:799.66px;top:42px"></i>
<i class="vdiv" style="left:918.48px;top:42px"></i>
<i class="vdiv" style="left:1038.11px;top:42px"></i>
<i class="vdiv" style="left:1156.37px;top:42px"></i>
<i class="vdiv" style="left:1275.54px;top:42px"></i>
<i class="vdiv" style="left:1394.6px;top:42px"></i>
</div>
<svg class="overlay" width="1399" height="164" viewBox="0 486 1399 164">
<defs><linearGradient id="pg" x1="0" y1="0" x2="1" y2="1"><stop offset="0" stop-color="#ffffff"/><stop offset="1" stop-color="#e4e4e4"/></linearGradient><radialGradient id="bl" cx="0.35" cy="0.35" r="0.7"><stop offset="0" stop-color="#58b8f8"/><stop offset="1" stop-color="#0a78d8"/></radialGradient><linearGradient id="th" x1="0" y1="0" x2="1" y2="0"><stop offset="0" stop-color="#f6f6f6"/><stop offset="0.5" stop-color="#e4e4e4"/><stop offset="1" stop-color="#c8c8c8"/></linearGradient></defs>
<rect x="1.5" y="485" width="1.4" height="17" fill="#707070"/>
<rect x="2" y="519" width="11.8" height="131" fill="#c9d9ea"/>
<rect x="0" y="486" width="1.2" height="164" fill="#f4f4fb"/>
<path d="M4.6 509.3l5 4.6M9.6 509.3l-5 4.6" stroke="#101010" stroke-width="1.7" fill="none"/>
<path d="M57.6 520.8l3-5.2l3 5.2" stroke="#cfcfcf" stroke-width="0.9" fill="none"/>
<path d="M1374.1 490.6v5.4l-3.2-2.7z" fill="#a8a8a8"/>
<path d="M1387.2 490.4v5.8l3.6-2.9z" fill="#101010"/>
<path d="M18 530.8h6.2l3.2 3.2v9h-9.4z" fill="url(#pg)" stroke="#6e6e6e" stroke-width="0.9" stroke-linejoin="round"/>
<path d="M24.2 530.8v3.2h3.2" fill="none" stroke="#6e6e6e" stroke-width="0.8"/>
<circle cx="27" cy="541.1" r="2.8" fill="url(#bl)" stroke="#0a6cc0" stroke-width="0.5"/>
<path d="M1368.6 534.5l5.6 5.6M1374.2 534.5l-5.6 5.6" stroke="#7a7a7a" stroke-width="1.2" fill="none"/>
<path d="M18 548.2h6.2l3.2 3.2v9h-9.4z" fill="url(#pg)" stroke="#6e6e6e" stroke-width="0.9" stroke-linejoin="round"/>
<path d="M24.2 548.2v3.2h3.2" fill="none" stroke="#6e6e6e" stroke-width="0.8"/>
<circle cx="27" cy="558.5" r="2.8" fill="url(#bl)" stroke="#0a6cc0" stroke-width="0.5"/>
<path d="M1368.6 551.9l5.6 5.6M1374.2 551.9l-5.6 5.6" stroke="#c8a878" stroke-width="1.2" fill="none"/>
<path d="M18 565.6h6.2l3.2 3.2v9h-9.4z" fill="url(#pg)" stroke="#6e6e6e" stroke-width="0.9" stroke-linejoin="round"/>
<path d="M24.2 565.6v3.2h3.2" fill="none" stroke="#6e6e6e" stroke-width="0.8"/>
<circle cx="27" cy="575.9" r="2.8" fill="url(#bl)" stroke="#0a6cc0" stroke-width="0.5"/>
<path d="M1368.6 569.3l5.6 5.6M1374.2 569.3l-5.6 5.6" stroke="#7a7a7a" stroke-width="1.2" fill="none"/>
<path d="M18 583.0h6.2l3.2 3.2v9h-9.4z" fill="url(#pg)" stroke="#6e6e6e" stroke-width="0.9" stroke-linejoin="round"/>
<path d="M24.2 583.0v3.2h3.2" fill="none" stroke="#6e6e6e" stroke-width="0.8"/>
<circle cx="27" cy="593.3" r="2.8" fill="url(#bl)" stroke="#0a6cc0" stroke-width="0.5"/>
<path d="M1368.6 586.7l5.6 5.6M1374.2 586.7l-5.6 5.6" stroke="#7a7a7a" stroke-width="1.2" fill="none"/>
<path d="M18 600.4h6.2l3.2 3.2v9h-9.4z" fill="url(#pg)" stroke="#6e6e6e" stroke-width="0.9" stroke-linejoin="round"/>
<path d="M24.2 600.4v3.2h3.2" fill="none" stroke="#6e6e6e" stroke-width="0.8"/>
<circle cx="27" cy="610.7" r="2.8" fill="url(#bl)" stroke="#0a6cc0" stroke-width="0.5"/>
<path d="M1368.6 604.1l5.6 5.6M1374.2 604.1l-5.6 5.6" stroke="#7a7a7a" stroke-width="1.2" fill="none"/>
<path d="M18 617.8h6.2l3.2 3.2v9h-9.4z" fill="url(#pg)" stroke="#6e6e6e" stroke-width="0.9" stroke-linejoin="round"/>
<path d="M24.2 617.8v3.2h3.2" fill="none" stroke="#6e6e6e" stroke-width="0.8"/>
<circle cx="27" cy="628.1" r="2.8" fill="url(#bl)" stroke="#0a6cc0" stroke-width="0.5"/>
<path d="M1368.6 621.5l5.6 5.6M1374.2 621.5l-5.6 5.6" stroke="#7a7a7a" stroke-width="1.2" fill="none"/>
<path d="M18 635.2h6.2l3.2 3.2v9h-9.4z" fill="url(#pg)" stroke="#6e6e6e" stroke-width="0.9" stroke-linejoin="round"/>
<path d="M24.2 635.2v3.2h3.2" fill="none" stroke="#6e6e6e" stroke-width="0.8"/>
<circle cx="27" cy="645.5" r="2.8" fill="url(#bl)" stroke="#0a6cc0" stroke-width="0.5"/>
<path d="M1368.6 638.9l5.6 5.6M1374.2 638.9l-5.6 5.6" stroke="#7a7a7a" stroke-width="1.2" fill="none"/>
<rect x="1381.7" y="507" width="14.3" height="143" fill="#f0f0f0"/>
<rect x="1381.2" y="507" width="0.8" height="143" fill="#dadada"/>
<path d="M1385.7 516.9l3-3.1l3 3.1l-0.9 0l-2.1-1.6l-2.1 1.6z" fill="#404040" stroke="#404040" stroke-width="0.5"/>
<path d="M1385.6 640.6h6.4l-3.2 3.4z" fill="#404040"/>
<rect x="1382.8" y="523.2" width="11.6" height="82" rx="1.6" fill="url(#th)" stroke="#8e8e8e" stroke-width="0.9"/>
<rect x="1385.4" y="561.5" width="6.4" height="1" fill="#707070"/>
<rect x="1385.4" y="564" width="6.4" height="1" fill="#707070"/>
<rect x="1385.4" y="566.5" width="6.4" height="1" fill="#707070"/>
<rect x="1396" y="506" width="1" height="144" fill="#a0a0a0"/>
<rect x="1397" y="486" width="2" height="164" fill="#f8f8f8"/>
</svg>
<div class="vtext">Terminal</div>
</body></html>
